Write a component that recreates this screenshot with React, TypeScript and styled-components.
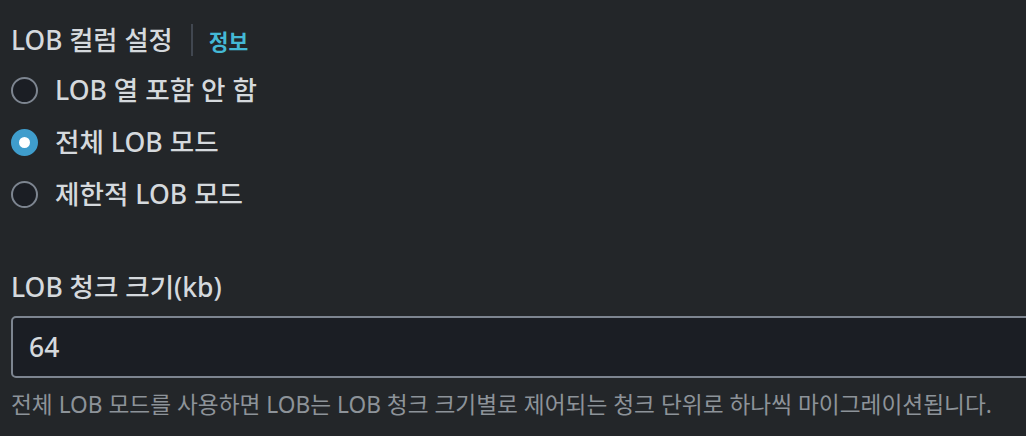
import React, { useState } from 'react'
import styled, { createGlobalStyle } from 'styled-components'

const GlobalStyle = createGlobalStyle`
  html, body {
    margin: 0;
    padding: 0;
    background: #232629;
    overflow: hidden;
  }
  body {
    font-family: "Noto Sans", "Noto Sans CJK KR", sans-serif;
    color: #d1d5db;
  }
`

const Page = styled.div`
  padding: 22px 0 0 11px;
  width: 1040px;
`

const Header = styled.div`
  display: flex;
  align-items: center;
  height: 36px;
`

const Title = styled.span`
  font-size: 26.3px;
  font-weight: 500;
  line-height: 36px;
  color: #d5d9dd;
`

const Divider = styled.span`
  width: 2px;
  height: 32px;
  background: #414750;
  margin: 0 16px 0 18px;
`

const InfoLink = styled.a`
  font-size: 21.5px;
  font-weight: 700;
  color: #44b9d6;
  text-decoration: none;
  cursor: pointer;
`

const RadioGroup = styled.div`
  display: flex;
  flex-direction: column;
  margin-top: 6px;
`

const RadioRow = styled.label`
  display: flex;
  align-items: center;
  height: 52px;
  gap: 17px;
  cursor: pointer;
`

const RadioCircle = styled.span<{ $checked: boolean }>`
  box-sizing: border-box;
  width: 27px;
  height: 27px;
  border-radius: 50%;
  border: ${(p) => (p.$checked ? '8px solid #3f9dcc' : '2px solid #7d8590')};
  background: ${(p) => (p.$checked ? '#ffffff' : '#1b1e24')};
  flex-shrink: 0;
`

const RadioLabel = styled.span`
  font-size: 26.6px;
  font-weight: 500;
  line-height: 36px;
  color: #d5d9dd;
`

const Field = styled.div`
  display: flex;
  flex-direction: column;
  margin-top: 49px;
`

const FieldLabel = styled.span`
  font-size: 26.5px;
  font-weight: 500;
  line-height: 36px;
  color: #d5d9dd;
`

const Input = styled.input`
  box-sizing: border-box;
  margin-top: 11px;
  height: 62px;
  width: 100%;
  padding: 0 16px;
  border: 2px solid #7d8590;
  border-radius: 5px;
  background: #1b1e24;
  color: #d5d9dd;
  font-family: "Noto Sans", "Noto Sans CJK KR", sans-serif;
  font-size: 26.5px;
  font-weight: 500;
  outline: none;
`

const Hint = styled.span`
  margin-top: 11px;
  font-size: 22.7px;
  line-height: 32px;
  color: #8d9399;
`

const options = ['LOB 열 포함 안 함', '전체 LOB 모드', '제한적 LOB 모드']

export default function App() {
  const [mode, setMode] = useState(1)
  const [chunk, setChunk] = useState('64')

  return (
    <Page>
      <GlobalStyle />
      <Header>
        <Title>LOB 컬럼 설정</Title>
        <Divider />
        <InfoLink>정보</InfoLink>
      </Header>
      <RadioGroup>
        {options.map((label, i) => (
          <RadioRow key={label} onClick={() => setMode(i)}>
            <RadioCircle $checked={mode === i} />
            <RadioLabel>{label}</RadioLabel>
          </RadioRow>
        ))}
      </RadioGroup>
      <Field>
        <FieldLabel>LOB 청크 크기(kb)</FieldLabel>
        <Input value={chunk} onChange={(e) => setChunk(e.target.value)} />
        <Hint>
          전체 LOB 모드를 사용하면 LOB는 LOB 청크 크기별로 제어되는 청크 단위로 하나씩 마이그레이션됩니다.
        </Hint>
      </Field>
    </Page>
  )
}
